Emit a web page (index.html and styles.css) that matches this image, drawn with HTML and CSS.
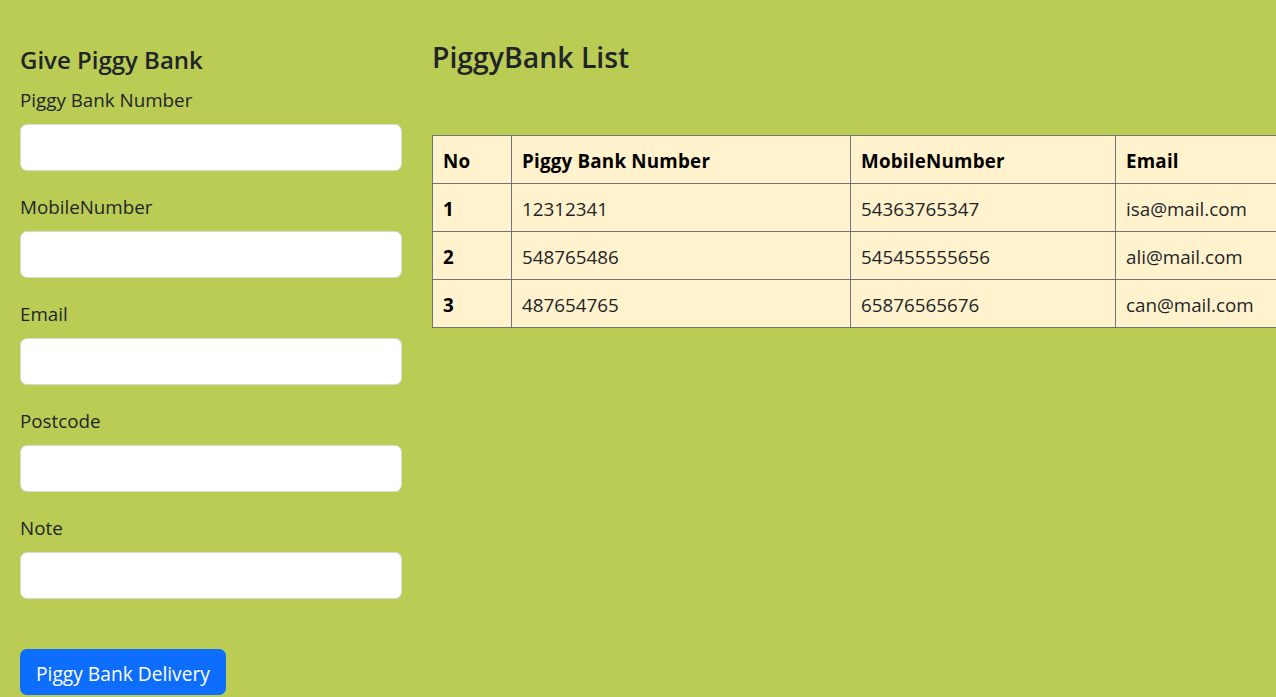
FILE: index.html
```html
<!DOCTYPE html>
<html lang="en">
<head>
<meta charset="utf-8">
<title>PiggyBank</title>
<link rel="stylesheet" href="styles.css">
</head>
<body>
<div class="page">
  <aside class="form-col">
    <h4 class="form-title">Give Piggy Bank</h4>
    <form class="form">
      <div class="field">
        <label class="label">Piggy Bank Number</label>
        <input class="input" type="text">
      </div>
      <div class="field">
        <label class="label">MobileNumber</label>
        <input class="input" type="text">
      </div>
      <div class="field">
        <label class="label">Email</label>
        <input class="input" type="text">
      </div>
      <div class="field">
        <label class="label">Postcode</label>
        <input class="input" type="text">
      </div>
      <div class="field">
        <label class="label">Note</label>
        <input class="input" type="text">
      </div>
      <button class="btn" type="button">Piggy Bank Delivery</button>
    </form>
  </aside>
  <main class="list-col">
    <h3 class="list-title">PiggyBank List</h3>
    <table class="table">
      <colgroup>
        <col class="c-no"><col class="c-num"><col class="c-mob"><col class="c-mail">
      </colgroup>
      <thead>
        <tr><th>No</th><th>Piggy Bank Number</th><th>MobileNumber</th><th>Email</th></tr>
      </thead>
      <tbody>
        <tr><th>1</th><td>12312341</td><td>54363765347</td><td>isa@mail.com</td></tr>
        <tr><th>2</th><td>548765486</td><td>545455555656</td><td>ali@mail.com</td></tr>
        <tr><th>3</th><td>487654765</td><td>65876565676</td><td>can@mail.com</td></tr>
      </tbody>
    </table>
  </main>
</div>
</body>
</html>
```
FILE: styles.css
```css
html, body {
  margin: 0;
  padding: 0;
}
body {
  background: #bbcc55;
  color: #212529;
  font-family: "Open Sans", "Liberation Sans", sans-serif;
  font-size: 18.8px;
  line-height: 1.5;
  overflow: hidden;
  width: 1276px;
  height: 697px;
}
.page {
  display: flex;
  gap: 30px;
  padding: 0 0 0 20px;
  overflow: hidden;
}
.form-col {
  width: 382px;
  flex: 0 0 382px;
  padding-top: 42px;
}
.form-title {
  margin: 0 0 9px;
  font-size: 24px;
  font-weight: 600;
  line-height: 35px;
}
.form {
  display: flex;
  flex-direction: column;
}
.field {
  display: flex;
  flex-direction: column;
  margin-bottom: 22px;
}
.label {
  line-height: 29px;
  margin-bottom: 9px;
}
.input {
  box-sizing: border-box;
  height: 47px;
  width: 100%;
  border: 1px solid #d6dbd2;
  border-radius: 7px;
  background: #fff;
  font: inherit;
  margin: 0;
}
.btn {
  align-self: flex-start;
  margin-top: 28px;
  height: 46px;
  padding: 4px 16px 0;
  border: 0;
  border-radius: 7px;
  background: #0d6efd;
  color: #fff;
  font: inherit;
  font-size: 19.2px;
}
.list-col {
  flex: 1 1 auto;
  min-width: 0;
  overflow: hidden;
  padding-top: 39px;
}
.list-title {
  margin: 0 0 59px;
  font-size: 28.4px;
  font-weight: 600;
  line-height: 37px;
}
.table {
  border-collapse: collapse;
  background: #fff2cc;
  table-layout: fixed;
  width: 1030px;
}
.c-no { width: 79px; }
.c-num { width: 339px; }
.c-mob { width: 265px; }
.c-mail { width: 347px; }
.table th, .table td {
  border: 1px solid #6d757f;
  padding: 2px 10px 0;
  height: 45px;
  text-align: left;
  line-height: 28px;
}
.table th {
  font-weight: 700;
  color: #000;
}
.table thead th {
  letter-spacing: 0.2px;
}
.table td {
  color: #212529;
}
```
